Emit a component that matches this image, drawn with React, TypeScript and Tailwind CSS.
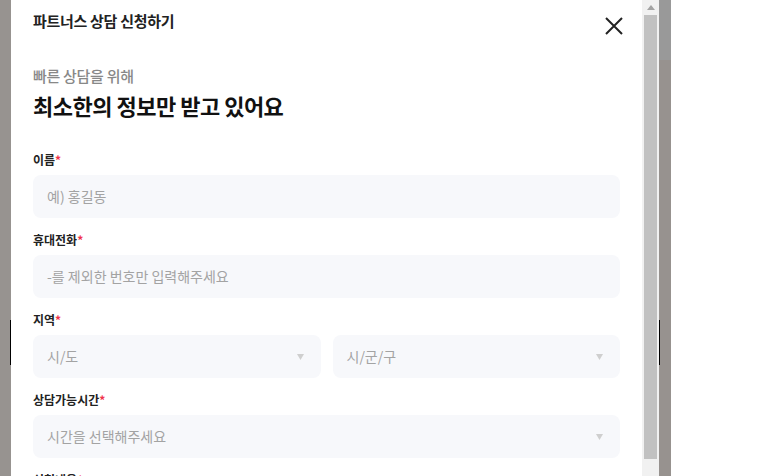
import React from 'react';

const font = { fontFamily: '"Noto Sans CJK KR", "Noto Sans", sans-serif' };

const Label = ({ text }: { text: string }) => (
  <div className="text-[12px] font-bold text-[#222] leading-[18px] h-[18px]">
    {text}
    <span className="text-[#f0334a]">*</span>
  </div>
);

const Caret = () => (
  <svg width="7" height="6" viewBox="0 0 7 6">
    <path d="M0 0 L7 0 L3.5 6 Z" fill="#cfcfcf" />
  </svg>
);

const Field = ({ label, placeholder }: { label: string; placeholder: string }) => (
  <div className="flex flex-col gap-[6px]">
    <Label text={label} />
    <div className="h-[43px] rounded-[8px] bg-[#f7f8fb] flex items-center px-[14px] text-[14px] text-[#a3a3a3]">
      {placeholder}
    </div>
  </div>
);

const SelectBox = ({ placeholder }: { placeholder: string }) => (
  <div className="flex-1 min-h-[43px] h-[43px] rounded-[8px] bg-[#f7f8fb] flex items-center justify-between pl-[14px] pr-[17px] text-[14px] text-[#a3a3a3]">
    <span>{placeholder}</span>
    <Caret />
  </div>
);

export default function App() {
  return (
    <div className="w-[766px] h-[476px] overflow-hidden flex bg-white" style={font}>
      <div className="w-[11px] h-full bg-[#979390] flex flex-col">
        <div className="mt-[320px] ml-[10px] w-px h-[45px] bg-black" />
      </div>

      <div className="w-[631px] h-full bg-white px-[22px] pt-[10px]">
        <div className="flex items-start justify-between">
          <h2 className="text-[15px] font-bold text-[#222] leading-[22px] tracking-[-0.3px]">파트너스 상담 신청하기</h2>
          <svg width="20" height="20" viewBox="0 0 20 20" className="mt-[6px] mr-[-4px]">
            <path d="M2 2 L18 18 M18 2 L2 18" stroke="#222" strokeWidth="2" />
          </svg>
        </div>

        <p className="mt-[30px] text-[15px] font-medium text-[#888] leading-[20px] tracking-[-0.3px]">빠른 상담을 위해</p>
        <p className="mt-[4px] text-[22px] font-bold text-[#111] leading-[30px] tracking-[-0.5px]">
          최소한의 정보만 받고 있어요
        </p>

        <div className="mt-[31px] flex flex-col gap-[13px]">
          <Field label="이름" placeholder="예) 홍길동" />
          <Field label="휴대전화" placeholder="-를 제외한 번호만 입력해주세요" />
          <div className="flex flex-col gap-[6px]">
            <Label text="지역" />
            <div className="flex gap-[12px]">
              <SelectBox placeholder="시/도" />
              <SelectBox placeholder="시/군/구" />
            </div>
          </div>
          <div className="flex flex-col gap-[6px]">
            <Label text="상담가능시간" />
            <SelectBox placeholder="시간을 선택해주세요" />
          </div>
          <Label text="신청내용" />
        </div>
      </div>

      <div className="w-[17px] h-full bg-[#f1f1f1] flex flex-col items-center">
        <div className="h-[14px] flex items-center justify-center">
          <svg width="8" height="5" viewBox="0 0 8 5">
            <path d="M0 5 L4 0 L8 5 Z" fill="#a3a3a3" />
          </svg>
        </div>
        <div className="mt-px w-[13px] h-[444px] bg-[#c1c1c1]" />
      </div>

      <div className="w-[12px] h-full flex flex-col">
        <div className="h-[60px] bg-[#999999]" />
        <div className="flex-1 bg-[#97928f] flex flex-col">
          <div className="mt-[260px] w-px h-[45px] bg-black" />
        </div>
      </div>

      <div className="flex-1 bg-white" />
    </div>
  );
}
